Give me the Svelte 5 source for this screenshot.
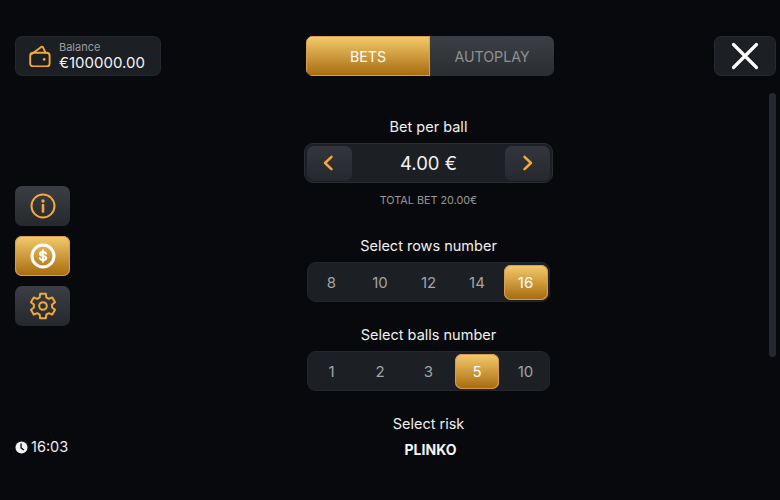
<script>
  const rows = [8, 10, 12, 14, 16];
  const balls = [1, 2, 3, 5, 10];
  const activeRow = 16;
  const activeBall = 5;

  // Six-toothed cog outline, centred on (14, 14)
  function cogPath() {
    const outer = 12.6;
    const inner = 9.2;
    const pt = (r, deg) => {
      const a = (deg * Math.PI) / 180;
      return `${(14 + r * Math.cos(a)).toFixed(2)} ${(14 + r * Math.sin(a)).toFixed(2)}`;
    };
    let d = '';
    for (let i = 0; i < 6; i++) {
      const c = -90 + i * 60;
      d += `${i === 0 ? 'M' : 'L'}${pt(inner, c - 21)} L${pt(outer, c - 13)} L${pt(outer, c + 13)} L${pt(inner, c + 21)} `;
    }
    return d + 'Z';
  }
  const cog = cogPath();
</script>

<div class="screen">
  <aside class="left">
    <div class="balance">
      <svg class="wallet" viewBox="0 0 22 22" width="22" height="22" fill="none" stroke="#f0a93a" stroke-width="1.9" stroke-linejoin="round" stroke-linecap="round">
        <path d="M2.400 9.200 L12.200 1.900 Q13.200 1.300 13.900 2.200 L16.600 7.800" />
        <path d="M4.200 7.800h13.400a3 3 0 0 1 3 3v7.600a3 3 0 0 1-3 3H4.200a3 3 0 0 1-3-3v-7.600a3 3 0 0 1 3-3z" />
        <circle cx="15.200" cy="14.400" r="1.300" fill="#f0a93a" stroke="none" />
      </svg>
      <div class="bal-text">
        <span class="bal-label">Balance</span>
        <span class="bal-value">€100000.00</span>
      </div>
    </div>

    <div class="side-buttons">
      <div class="side-btn">
        <svg viewBox="0 0 26 26" width="26" height="26" fill="none" stroke="#f0a93a" stroke-width="2">
          <circle cx="13" cy="13" r="11.500" />
          <path d="M13 12v6.600" stroke-width="2.600" stroke-linecap="round" />
          <circle cx="13" cy="8" r="1.700" fill="#f0a93a" stroke="none" />
        </svg>
      </div>
      <div class="side-btn gold">
        <svg viewBox="0 0 26 26" width="26" height="26" fill="none" stroke="#fff">
          <circle cx="13" cy="13" r="11" stroke-width="3" />
          <path d="M16 10.600c-.4-1.100-1.500-1.700-3-1.700-1.800 0-3 .9-3 2.100 0 2.900 6.200 1.300 6.200 4.100 0 1.200-1.300 2-3.200 2-1.500 0-2.700-.7-3.100-1.800M13 7.200v11.600" stroke-width="2" stroke-linecap="round" />
        </svg>
      </div>
      <div class="side-btn">
        <svg viewBox="0 0 28 28" width="28" height="28" fill="none" stroke="#f0a93a" stroke-width="2" stroke-linejoin="round">
          <path d={cog} />
          <circle cx="14" cy="14" r="3.800" />
        </svg>
      </div>
    </div>

    <div class="clock">
      <svg viewBox="0 0 14 14" width="13" height="13">
        <circle cx="7" cy="7" r="6.500" fill="#f1f1f1" />
        <path d="M6.500 2.800V7.400l3 2.400" fill="none" stroke="#08090c" stroke-width="1.400" />
      </svg>
      <span>16:03</span>
    </div>
  </aside>

  <main class="center">
    <div class="tabs">
      <div class="tab on">BETS</div>
      <div class="tab">AUTOPLAY</div>
    </div>

    <div class="title first">Bet per ball</div>
    <div class="stepper">
      <div class="step">
        <svg class="chev-l" viewBox="0 0 12 16" width="12" height="16" fill="none" stroke="#f4a936" stroke-width="2.500" stroke-linecap="round" stroke-linejoin="round"><path d="M9.500 1.800 3 8l6.500 6.200" /></svg>
      </div>
      <div class="amount">4.00 €</div>
      <div class="step">
        <svg class="chev-r" viewBox="0 0 12 16" width="12" height="16" fill="none" stroke="#f4a936" stroke-width="2.500" stroke-linecap="round" stroke-linejoin="round"><path d="M2.500 1.800 9 8l-6.500 6.200" /></svg>
      </div>
    </div>
    <div class="total">TOTAL BET 20.00€</div>

    <div class="title rows-title">Select rows number</div>
    <div class="seg">
      {#each rows as r}
        <div class="opt" class:on={r === activeRow}>{r}</div>
      {/each}
    </div>

    <div class="title balls-title">Select balls number</div>
    <div class="seg">
      {#each balls as b}
        <div class="opt" class:on={b === activeBall}>{b}</div>
      {/each}
    </div>

    <div class="title risk-title">Select risk</div>
    <div class="plinko">PLINKO</div>
  </main>

  <aside class="right">
    <div class="close">
      <svg viewBox="0 0 28 28" width="28" height="28" fill="none" stroke="#fff" stroke-width="3.200" stroke-linecap="round"><path d="M2.500 2.500l23 23M25.500 2.500l-23 23" /></svg>
    </div>
    <div class="scrollbar"></div>
  </aside>
</div>

<style>
  :global(body) {
    margin: 0;
    background: #08090c;
  }
  .screen {
    width: 780px;
    height: 500px;
    overflow: hidden;
    display: grid;
    grid-template-columns: 175px 507px 98px;
    background: #08090c;
    color: #f1f1f1;
    font-family: "Inter", "Roboto", sans-serif;
  }
  .left {
    display: flex;
    flex-direction: column;
    align-items: flex-start;
    padding: 36px 0 0 15px;
  }
  .balance {
    box-sizing: border-box;
    width: 146px;
    height: 40px;
    display: flex;
    align-items: center;
    gap: 8px;
    padding-left: 13px;
    background: #1c1f24;
    border: 1px solid #24272d;
    border-radius: 7px;
  }
  .wallet {
    margin-top: -1px;
  }
  .bal-text {
    display: flex;
    flex-direction: column;
  }
  .bal-label {
    font-size: 11px;
    line-height: 13px;
    color: #9a9c9f;
  }
  .bal-value {
    font-size: 15px;
    line-height: 17px;
    color: #f4f4f4;
  }
  .side-buttons {
    display: flex;
    flex-direction: column;
    gap: 10px;
    margin-top: 110px;
  }
  .side-btn {
    width: 55px;
    height: 40px;
    display: flex;
    align-items: center;
    justify-content: center;
    border-radius: 7px;
    background: linear-gradient(#3b3f45, #25282d);
  }
  .side-btn.gold,
  .tab.on,
  .opt.on {
    background: linear-gradient(#f5cb6d, #a66a0d);
  }
  .side-btn.gold {
    box-shadow: inset 0 0 0 1px #d99c55;
  }
  .clock {
    display: flex;
    align-items: center;
    gap: 3px;
    margin-top: 112px;
    font-size: 14.500px;
    line-height: 18px;
    color: #eee;
  }
  .center {
    display: flex;
    flex-direction: column;
    align-items: center;
    padding-top: 36px;
  }
  .tabs {
    width: 248px;
    height: 40px;
    margin-left: 3px;
    display: grid;
    grid-template-columns: 124px 124px;
    border-radius: 7px;
    overflow: hidden;
  }
  .tab {
    display: flex;
    align-items: center;
    justify-content: center;
    font-size: 14.200px;
    color: #8f9194;
    background: linear-gradient(#3c4046, #2a2d32);
  }
  .tab.on {
    color: #fff;
    box-shadow: inset 0 0 0 1px #d99c55;
  }
  .title {
    font-size: 14.500px;
    line-height: 17px;
    color: #f0f0f0;
    text-align: center;
  }
  .first {
    margin-top: 42px;
  }
  .stepper {
    box-sizing: border-box;
    width: 249px;
    height: 40px;
    margin-top: 8px;
    display: flex;
    align-items: center;
    justify-content: space-between;
    padding: 0 2px;
    background: #1c1f24;
    border: 1px solid #2a2d34;
    border-radius: 9px;
  }
  .step {
    width: 45px;
    height: 35px;
    display: flex;
    align-items: center;
    justify-content: center;
    border-radius: 7px;
    background: linear-gradient(#33363c, #25282d);
  }
  .chev-l {
    margin-right: 4px;
  }
  .chev-r {
    margin-left: 2px;
  }
  .amount {
    font-size: 18.500px;
    color: #f2f2f2;
  }
  .total {
    margin-top: 11px;
    font-size: 10.800px;
    line-height: 13px;
    color: #98999b;
  }
  .rows-title {
    margin-top: 30px;
  }
  .balls-title {
    margin-top: 24px;
  }
  .risk-title {
    margin-top: 24px;
  }
  .seg {
    box-sizing: border-box;
    width: 243px;
    height: 40px;
    margin-top: 8px;
    display: grid;
    grid-template-columns: repeat(5, 44px);
    column-gap: 4.500px;
    align-items: center;
    padding: 0 1.500px;
    background: #1c1f24;
    border: 1px solid #24272d;
    border-radius: 9px;
  }
  .opt {
    height: 35px;
    display: flex;
    align-items: center;
    justify-content: center;
    border-radius: 7px;
    font-size: 15px;
    color: #a3a4a6;
  }
  .opt.on {
    color: #fff;
    box-shadow: inset 0 0 0 1px #d99c55;
  }
  .plinko {
    margin-top: 9px;
    margin-left: 4px;
    font-size: 14px;
    line-height: 17px;
    font-weight: 700;
    color: #f4f4f4;
  }
  .right {
    display: flex;
    flex-direction: column;
    align-items: flex-end;
    padding: 36px 4px 0 0;
  }
  .close {
    box-sizing: border-box;
    width: 62px;
    height: 40px;
    display: flex;
    align-items: center;
    justify-content: center;
    background: #1c1f24;
    border: 1px solid #272a30;
    border-radius: 7px;
  }
  .scrollbar {
    width: 7px;
    height: 264px;
    margin-top: 17px;
    border-radius: 4px;
    background: #25282e;
  }
</style>
